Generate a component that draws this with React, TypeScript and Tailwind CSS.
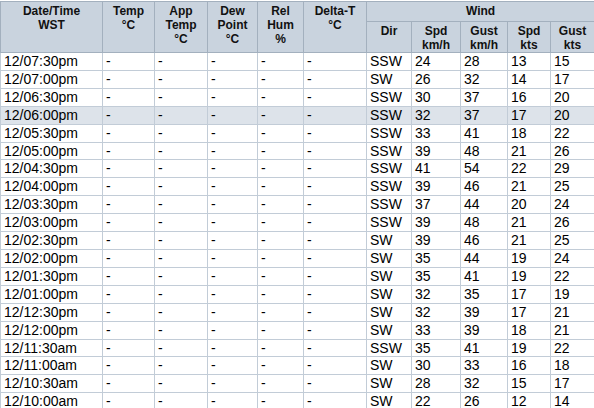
import React from "react";

const rows: [string, string, string, string, string, string][] = [
  ["12/07:30pm", "SSW", "24", "28", "13", "15"],
  ["12/07:00pm", "SW", "26", "32", "14", "17"],
  ["12/06:30pm", "SSW", "30", "37", "16", "20"],
  ["12/06:00pm", "SSW", "32", "37", "17", "20"],
  ["12/05:30pm", "SSW", "33", "41", "18", "22"],
  ["12/05:00pm", "SSW", "39", "48", "21", "26"],
  ["12/04:30pm", "SSW", "41", "54", "22", "29"],
  ["12/04:00pm", "SSW", "39", "46", "21", "25"],
  ["12/03:30pm", "SSW", "37", "44", "20", "24"],
  ["12/03:00pm", "SSW", "39", "48", "21", "26"],
  ["12/02:30pm", "SW", "39", "46", "21", "25"],
  ["12/02:00pm", "SW", "35", "44", "19", "24"],
  ["12/01:30pm", "SW", "35", "41", "19", "22"],
  ["12/01:00pm", "SW", "32", "35", "17", "19"],
  ["12/12:30pm", "SW", "32", "39", "17", "21"],
  ["12/12:00pm", "SW", "33", "39", "18", "21"],
  ["12/11:30am", "SSW", "35", "41", "19", "22"],
  ["12/11:00am", "SW", "30", "33", "16", "18"],
  ["12/10:30am", "SW", "28", "32", "15", "17"],
  ["12/10:00am", "SW", "22", "26", "12", "14"],
];

const widths = [102, 52, 53, 50, 46, 63, 45, 49, 47, 43, 44];

const th =
  "border border-[#a3b0be] bg-[#c9d3de] align-top text-center font-bold text-[12px] leading-[14px] text-[#111] p-0 pt-[2px]";
const td =
  "border border-[#c2ccd7] p-0 pl-[3px] text-left align-middle text-[14px] leading-[16.9px] text-black whitespace-nowrap";

export default function App() {
  return (
    <div
      className="w-[594px] h-[408px] overflow-hidden bg-white pt-px"
      style={{ fontFamily: '"Liberation Sans", Arial, sans-serif' }}
    >
      <table className="table-fixed border-collapse w-[594px]">
        <colgroup>
          {widths.map((w, i) => (
            <col key={i} style={{ width: w }} />
          ))}
        </colgroup>
        <thead>
          <tr className="h-[20px]">
            <th rowSpan={2} className={th}>
              Date/Time
              <br />
              WST
            </th>
            <th rowSpan={2} className={th}>
              Temp
              <br />
              °C
            </th>
            <th rowSpan={2} className={th}>
              App
              <br />
              Temp
              <br />
              °C
            </th>
            <th rowSpan={2} className={th}>
              Dew
              <br />
              Point
              <br />
              °C
            </th>
            <th rowSpan={2} className={th}>
              Rel
              <br />
              Hum
              <br />
              %
            </th>
            <th rowSpan={2} className={th}>
              Delta-T
              <br />
              °C
            </th>
            <th colSpan={5} className={th}>
              Wind
            </th>
          </tr>
          <tr className="h-[28px]">
            <th className={th}>Dir</th>
            <th className={th}>
              Spd
              <br />
              km/h
            </th>
            <th className={th}>
              Gust
              <br />
              km/h
            </th>
            <th className={th}>
              Spd
              <br />
              kts
            </th>
            <th className={th}>
              Gust
              <br />
              kts
            </th>
          </tr>
        </thead>
        <tbody>
          {rows.map((r, i) => (
            <tr key={i} className={r[0] === "12/06:00pm" ? "bg-[#dde3ea]" : "bg-white"}>
              <td className={td}>{r[0]}</td>
              <td className={td}>-</td>
              <td className={td}>-</td>
              <td className={td}>-</td>
              <td className={td}>-</td>
              <td className={td}>-</td>
              <td className={td}>{r[1]}</td>
              <td className={td}>{r[2]}</td>
              <td className={td}>{r[3]}</td>
              <td className={td}>{r[4]}</td>
              <td className={td}>{r[5]}</td>
            </tr>
          ))}
        </tbody>
      </table>
    </div>
  );
}
